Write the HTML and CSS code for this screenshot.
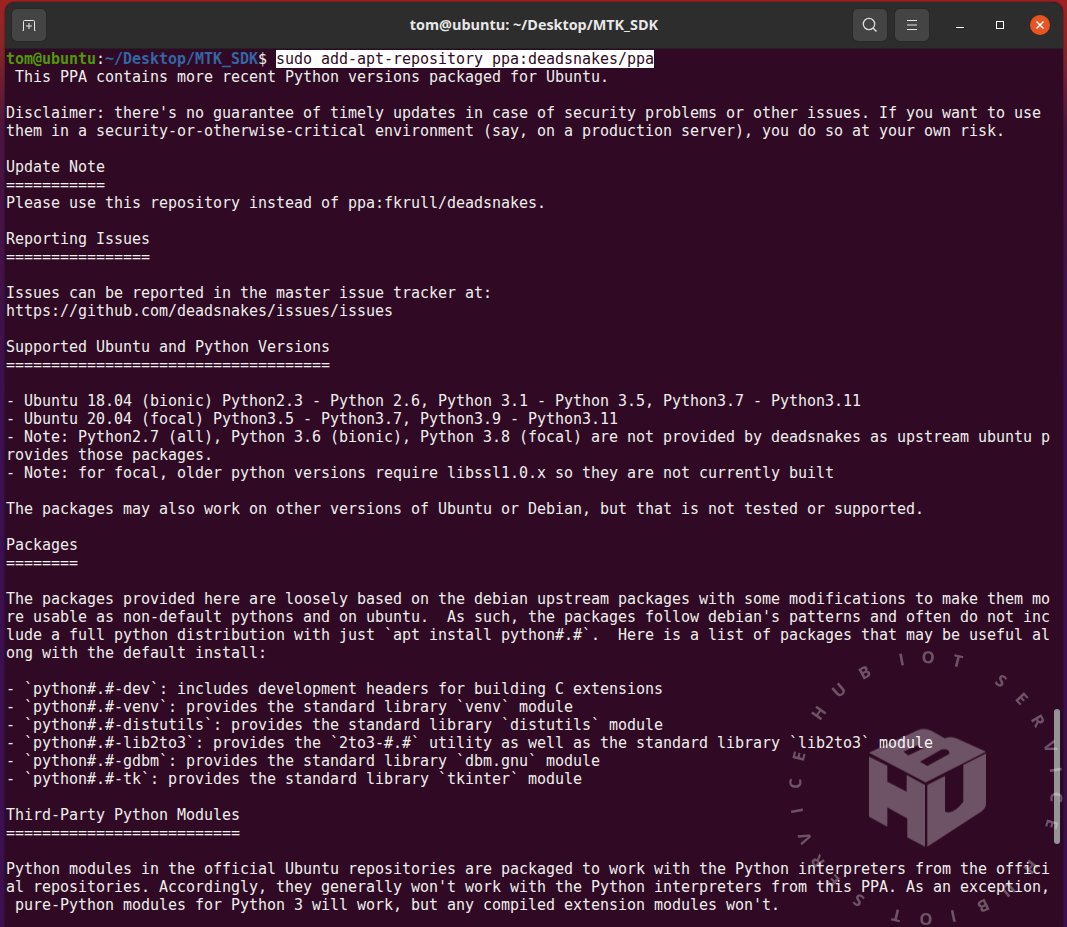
FILE: index.html
```html
<!DOCTYPE html>
<html lang="en">
<head>
<meta charset="utf-8">
<title>tom@ubuntu: ~/Desktop/MTK_SDK</title>
<link rel="stylesheet" href="styles.css">
</head>
<body>
<div class="window">
  <header class="titlebar">
    <button class="tb-btn"><svg width="16" height="16" viewBox="0 0 16 16"><path d="M1.5 13.5h1V4.5a1 1 0 0 1 1-1h9a1 1 0 0 1 1 1v9h1" fill="none" stroke="#e6e6e6" stroke-width="1"/><path d="M8 6v6M5 9h6" stroke="#e6e6e6" stroke-width="1"/></svg></button>
    <div class="title">tom@ubuntu: ~/Desktop/MTK_SDK</div>
    <div class="controls">
      <button class="tb-btn"><svg width="16" height="16" viewBox="0 0 16 16"><circle cx="7" cy="7" r="5.7" fill="none" stroke="#dcdcdc" stroke-width="1.3"/><path d="M11 11l3.5 3.5" stroke="#dcdcdc" stroke-width="1.4"/></svg></button>
      <button class="tb-btn"><svg width="16" height="16" viewBox="0 0 16 16"><path d="M3 3.5h10M3 8h10M3 12.5h10" stroke="#e6e6e6" stroke-width="1"/></svg></button>
      <div class="wm-btns">
        <svg class="wm" width="10" height="10" viewBox="0 0 10 10"><path d="M1 7.5h8" stroke="#fff" stroke-width="1"/></svg>
        <svg class="wm" width="10" height="10" viewBox="0 0 10 10"><rect x="1.5" y="1.5" width="7" height="7" fill="none" stroke="#fff" stroke-width="1"/></svg>
        <div class="close"><svg width="10" height="10" viewBox="0 0 10 10"><path d="M1.5 1.5l7 7M8.5 1.5l-7 7" stroke="#fff" stroke-width="1.6"/></svg></div>
      </div>
    </div>
  </header>
  <main class="term">
<pre class="output"><span class="user">tom@ubuntu</span>:<span class="path">~/Desktop/MTK_SDK</span>$ <span class="sel">sudo add-apt-repository ppa:deadsnakes/ppa</span>
 This PPA contains more recent Python versions packaged for Ubuntu.

Disclaimer: there's no guarantee of timely updates in case of security problems or other issues. If you want to use
them in a security-or-otherwise-critical environment (say, on a production server), you do so at your own risk.

Update Note
===========
Please use this repository instead of ppa:fkrull/deadsnakes.

Reporting Issues
================

Issues can be reported in the master issue tracker at:
https://github.com/deadsnakes/issues/issues

Supported Ubuntu and Python Versions
====================================

- Ubuntu 18.04 (bionic) Python2.3 - Python 2.6, Python 3.1 - Python 3.5, Python3.7 - Python3.11
- Ubuntu 20.04 (focal) Python3.5 - Python3.7, Python3.9 - Python3.11
- Note: Python2.7 (all), Python 3.6 (bionic), Python 3.8 (focal) are not provided by deadsnakes as upstream ubuntu p
rovides those packages.
- Note: for focal, older python versions require libssl1.0.x so they are not currently built

The packages may also work on other versions of Ubuntu or Debian, but that is not tested or supported.

Packages
========

The packages provided here are loosely based on the debian upstream packages with some modifications to make them mo
re usable as non-default pythons and on ubuntu.  As such, the packages follow debian's patterns and often do not inc
lude a full python distribution with just `apt install python#.#`.  Here is a list of packages that may be useful al
ong with the default install:

- `python#.#-dev`: includes development headers for building C extensions
- `python#.#-venv`: provides the standard library `venv` module
- `python#.#-distutils`: provides the standard library `distutils` module
- `python#.#-lib2to3`: provides the `2to3-#.#` utility as well as the standard library `lib2to3` module
- `python#.#-gdbm`: provides the standard library `dbm.gnu` module
- `python#.#-tk`: provides the standard library `tkinter` module

Third-Party Python Modules
==========================

Python modules in the official Ubuntu repositories are packaged to work with the Python interpreters from the offici
al repositories. Accordingly, they generally won't work with the Python interpreters from this PPA. As an exception,
 pure-Python modules for Python 3 will work, but any compiled extension modules won't.</pre>
    <div class="scrollbar"></div>
  </main>
</div>
<svg class="watermark" width="300" height="300" viewBox="0 0 300 300">
  <g class="ring-text" text-anchor="middle">
    <text x="150" y="25" transform="rotate(-55 150 150)">H</text>
    <text x="150" y="25" transform="rotate(-41.6 150 150)">U</text>
    <text x="150" y="25" transform="rotate(-28 150 150)">B</text>
    <text x="150" y="25" transform="rotate(-10.8 150 150)">I</text>
    <text x="150" y="25" transform="rotate(1 150 150)">O</text>
    <text x="150" y="25" transform="rotate(14 150 150)">T</text>
    <text x="150" y="25" transform="rotate(35 150 150)">S</text>
    <text x="150" y="25" transform="rotate(47 150 150)">E</text>
    <text x="150" y="25" transform="rotate(59 150 150)">R</text>
    <text x="150" y="25" transform="rotate(71.6 150 150)">V</text>
    <text x="150" y="25" transform="rotate(82 150 150)">I</text>
    <text x="150" y="25" transform="rotate(94 150 150)">C</text>
    <text x="150" y="25" transform="rotate(106 150 150)">E</text>
    <text x="150" y="25" transform="rotate(127 150 150)">H</text>
    <text x="150" y="25" transform="rotate(141 150 150)">U</text>
    <text x="150" y="25" transform="rotate(154 150 150)">B</text>
    <text x="150" y="25" transform="rotate(168 150 150)">I</text>
    <text x="150" y="25" transform="rotate(180 150 150)">O</text>
    <text x="150" y="25" transform="rotate(193 150 150)">T</text>
    <text x="150" y="25" transform="rotate(211 150 150)">S</text>
    <text x="150" y="25" transform="rotate(225 150 150)">E</text>
    <text x="150" y="25" transform="rotate(236 150 150)">R</text>
    <text x="150" y="25" transform="rotate(247.5 150 150)">V</text>
    <text x="150" y="25" transform="rotate(260 150 150)">I</text>
    <text x="150" y="25" transform="rotate(272 150 150)">C</text>
    <text x="150" y="25" transform="rotate(284 150 150)">E</text>
  </g>
  <g class="logo" transform="translate(74 82) scale(.33333)">
    <path fill-rule="evenodd" d="M57 98 L205 30 Q225 22 245 33 L285 55 Q300 48 320 55 L408 95 L227 187 Z M160 95 L205 75 L222 84 L175 106 Z M210 125 L275 88 Q300 85 298 102 L232 138 Z"/>
    <path d="M57 110 L112 137 V185 L170 215 V165 L225 195 V380 L172 352 V295 L112 262 V320 L57 290 Z"/>
    <path d="M232 195 L285 168 V275 Q310 285 340 245 V135 L408 100 V250 Q408 268 385 280 L232 380 Z"/>
  </g>
</svg>
</body>
</html>
```
FILE: styles.css
```css
html, body {
  margin: 0;
  padding: 0;
  width: 1067px;
  height: 927px;
  overflow: hidden;
  background: linear-gradient(to bottom, #a02222 0, #8c2626 40px, #4a1440 130px, #3b0f50 400px);
}
body {
  position: relative;
}
.window {
  margin: 2px 0 0 5px;
  height: 925px;
  width: 1058px;
  display: flex;
  flex-direction: column;
  border-radius: 10px 10px 0 0;
  overflow: hidden;
  background: #300a24;
  box-shadow: 0 0 2px rgba(0, 0, 0, .7);
}
.titlebar {
  flex: 0 0 47px;
  box-sizing: border-box;
  background: #2d2d2d;
  border-bottom: 1px solid #222;
  display: flex;
  align-items: center;
  justify-content: space-between;
  position: relative;
  padding: 0 13px 0 7px;
}
.tb-btn {
  width: 34px;
  height: 32px;
  margin: 0;
  padding: 0;
  border: 0;
  border-radius: 5px;
  background: #444;
  display: flex;
  align-items: center;
  justify-content: center;
  box-shadow: 0 0 0 1px #282828;
}
.title {
  position: absolute;
  left: 0;
  right: 0;
  top: 14px;
  text-align: center;
  font: bold 14.4px/18px "Open Sans", "Noto Sans", sans-serif;
  color: #e8e8e8;
}
.controls {
  display: flex;
  align-items: center;
  gap: 8px;
  position: relative;
}
.wm-btns {
  display: flex;
  align-items: center;
  margin-left: 18px;
  gap: 30px;
}
.close {
  width: 20px;
  height: 20px;
  border-radius: 50%;
  background: #e95420;
  display: flex;
  align-items: center;
  justify-content: center;
  margin-left: -5px;
}
.term {
  flex: 1;
  position: relative;
  padding: 1px 0 0 1px;
  overflow: hidden;
}
.output {
  margin: 0;
  font: 15px/18px "DejaVu Sans Mono", monospace;
  letter-spacing: -0.03px;
  color: #eeeeec;
  white-space: pre;
}
.user { color: #4e9a06; font-weight: bold; }
.path { color: #3465a4; font-weight: bold; }
.sel { background: #fff; color: #300a24; }
.scrollbar {
  position: absolute;
  right: 3px;
  top: 660px;
  width: 6px;
  height: 135px;
  border-radius: 3px;
  background: #949494;
}
.watermark {
  position: absolute;
  left: 776px;
  top: 638px;
  pointer-events: none;
}
.ring-text {
  font: 700 16.5px "Open Sans", sans-serif;
  fill: #fff;
  opacity: .3;
}
.logo { fill: #fff; opacity: .3; }
```
